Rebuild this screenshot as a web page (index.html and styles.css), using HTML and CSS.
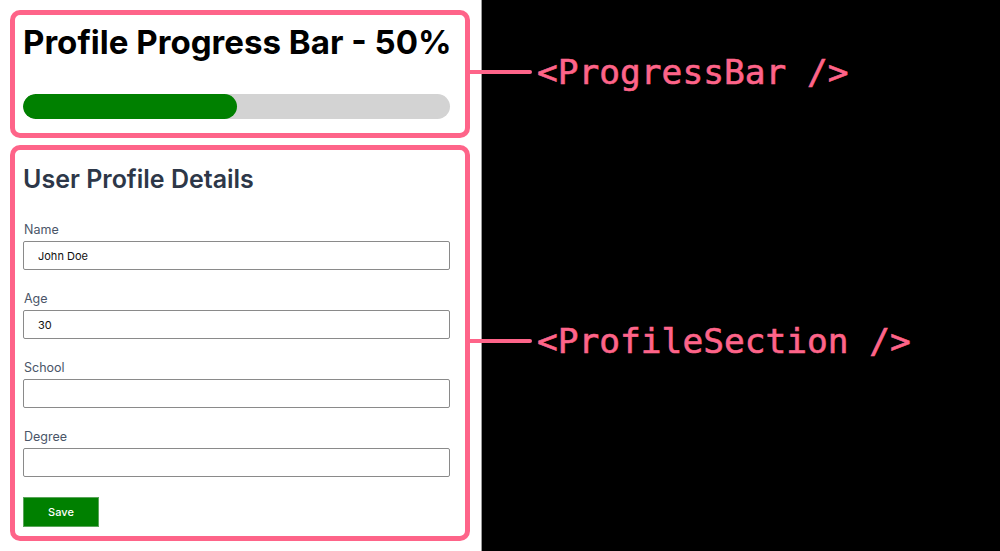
FILE: index.html
```html
<!DOCTYPE html>
<html>
<head>
<meta charset="utf-8">
<link rel="stylesheet" href="styles.css">
</head>
<body>
<div class="page">
  <div class="row row-progress">
    <section class="card card-progress">
      <h1 class="title">Profile Progress Bar - 50%</h1>
      <div class="bar"><div class="bar-fill" style="width: 50%"></div></div>
    </section>
    <div class="connector"></div>
    <div class="tag">&lt;ProgressBar /&gt;</div>
  </div>
  <div class="row row-profile">
    <section class="card card-profile">
      <h2 class="subtitle">User Profile Details</h2>
      <div class="field">
        <label class="label">Name</label>
        <input class="input" type="text" value="John Doe">
      </div>
      <div class="field">
        <label class="label">Age</label>
        <input class="input" type="text" value="30">
      </div>
      <div class="field">
        <label class="label">School</label>
        <input class="input" type="text" value="">
      </div>
      <div class="field">
        <label class="label">Degree</label>
        <input class="input" type="text" value="">
      </div>
      <button class="save">Save</button>
    </section>
    <div class="connector"></div>
    <div class="tag">&lt;ProfileSection /&gt;</div>
  </div>
</div>
</body>
</html>
```
FILE: styles.css
```css
html, body {
  margin: 0;
  padding: 0;
  height: 100%;
}
body {
  background: linear-gradient(to right, #ffffff 0, #ffffff 481px, #9a9a9a 481px, #9a9a9a 482px, #000000 482px);
  font-family: Inter, "Noto Sans", sans-serif;
  overflow: hidden;
}
.page {
  display: flex;
  flex-direction: column;
  gap: 7px;
  padding: 10px 0 0 10px;
}
.row {
  display: flex;
  align-items: center;
}
.card {
  box-sizing: border-box;
  width: 460px;
  border: 5px solid #fe6489;
  border-radius: 10px;
  background: #fff;
}
.card-progress {
  height: 128px;
  padding: 8px 15px 0 8px;
}
.title {
  margin: 0;
  font-size: 33.1px;
  line-height: 38px;
  font-weight: 700;
  color: #000;
  white-space: nowrap;
}
.bar {
  margin-top: 33px;
  height: 25px;
  border-radius: 13px;
  background: #d3d3d3;
  overflow: hidden;
}
.bar-fill {
  height: 100%;
  background: #008000;
  border-radius: 13px;
}
.card-profile {
  height: 396px;
  padding: 14px 15px 0 8px;
}
.subtitle {
  margin: 0 0 28px;
  font-size: 25px;
  line-height: 30px;
  font-weight: 600;
  color: #2d3748;
}
.field {
  display: flex;
  flex-direction: column;
  margin-bottom: 21px;
}
.label {
  font-size: 12.5px;
  line-height: 16px;
  color: #4a5568;
  margin-bottom: 3px;
  padding-left: 1px;
}
.input {
  box-sizing: border-box;
  width: 427px;
  height: 29px;
  border: 1px solid #8a8a8a;
  border-radius: 2px;
  padding: 0 14px;
  font-family: Inter, "Liberation Sans", sans-serif;
  font-size: 11px;
  color: #111;
  background: #fff;
  outline: none;
}
.save {
  margin-top: -1px;
  width: 76px;
  height: 30px;
  border: 1px solid #5aa55a;
  background: #008000;
  color: #fff;
  font-family: Inter, "Liberation Sans", sans-serif;
  font-size: 11px;
  font-weight: 500;
  padding: 0;
}
.connector {
  width: 62px;
  height: 4px;
  background: #fe6489;
  border-radius: 0 2px 2px 0;
  margin-bottom: 4px;
}
.tag {
  margin-left: 5px;
  margin-bottom: 4px;
  font-family: "DejaVu Sans Mono", "Liberation Mono", monospace;
  font-size: 34.5px;
  color: #fe6489;
  -webkit-text-stroke: 0.6px #fe6489;
  white-space: pre;
}
```
